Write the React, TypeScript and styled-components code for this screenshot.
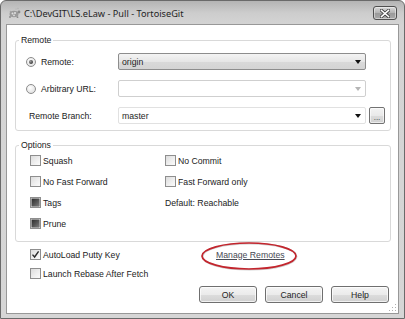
import React from 'react';
import styled, { createGlobalStyle } from 'styled-components';

const Global = createGlobalStyle`
  html, body { margin: 0; padding: 0; background: #ffffff; }
  body { width: 405px; height: 319px; overflow: hidden; }
  * { box-sizing: border-box; }
`;

const Window = styled.div`
  width: 405px;
  height: 319px;
  display: flex;
  flex-direction: column;
  background: linear-gradient(180deg, #b4b4b4 0px, #cdcdcd 12px, #d4d4d4 24px, #d6d6d6 100%);
  border: 1px solid #6a6a6a;
  border-radius: 6px 6px 0 0;
  font-family: "Liberation Sans", Arial, sans-serif;
  font-size: 8.7px;
  color: #222222;
`;

const TitleBar = styled.div`
  height: 23px;
  flex: none;
  display: flex;
  align-items: center;
  padding: 0 7px 0 7px;
  gap: 3px;
`;

const TitleText = styled.div`
  flex: 1;
  font-family: "Noto Sans", "Open Sans", sans-serif;
  font-size: 9.2px;
  color: #1e1e1e;
  white-space: nowrap;
  padding-top: 1px;
`;

const CloseButton = styled.div`
  width: 24px;
  height: 14px;
  margin-top: 1px;
  border: 1px solid #4f4f4f;
  border-radius: 3px;
  background: linear-gradient(180deg, #d9d9d9 0%, #b2b2b2 50%, #9a9a9a 51%, #a9a9a9 100%);
  box-shadow: inset 0 0 0 1px rgba(255, 255, 255, 0.45);
  display: flex;
  align-items: center;
  justify-content: center;
`;

const Client = styled.div`
  flex: 1;
  margin: 0 5px 4px 5px;
  border: 1px solid #989898;
  background: #ffffff;
  display: flex;
  flex-direction: column;
  padding: 15px 7px 0 8px;
`;

const GroupBox = styled.div<{ $height: number; $gap?: number }>`
  height: ${(p) => p.$height}px;
  margin-top: ${(p) => p.$gap ?? 0}px;
  border: 1px solid #d9d9d9;
  border-radius: 3px;
  display: flex;
  flex-direction: column;
  flex: none;
`;

const Legend = styled.div`
  align-self: flex-start;
  margin: -7px 0 0 3px;
  padding: 0 2px;
  height: 12px;
  line-height: 12px;
  background: #ffffff;
`;

const RemoteGrid = styled.div`
  display: grid;
  grid-template-columns: 102px 248px 1fr;
  grid-auto-rows: 17px;
  row-gap: 10px;
  margin-top: 7px;
  align-items: center;
`;

const FieldLabel = styled.div<{ $indent: number }>`
  display: flex;
  align-items: center;
  gap: 5px;
  padding-left: ${(p) => p.$indent}px;
  white-space: nowrap;
`;

const Radio = styled.span<{ $on?: boolean }>`
  width: 10px;
  height: 10px;
  border-radius: 50%;
  border: 1px solid #8c8c8c;
  background: radial-gradient(circle at 40% 35%, #ffffff 0%, #e4e4e4 70%, #d2d2d2 100%);
  display: inline-flex;
  align-items: center;
  justify-content: center;
  flex: none;
  &::after {
    content: '';
    width: 4px;
    height: 4px;
    border-radius: 50%;
    display: ${(p) => (p.$on ? 'block' : 'none')};
    background: radial-gradient(circle at 35% 35%, #9a9a9a 0%, #3c3c3c 70%, #222 100%);
  }
`;

const Combo = styled.div<{ $variant: 'list' | 'disabled' | 'edit' }>`
  height: 17px;
  display: flex;
  align-items: center;
  padding: 0 4px 0 3px;
  border-radius: 2px;
  border: 1px solid
    ${(p) => (p.$variant === 'list' ? '#8d8d8d' : p.$variant === 'disabled' ? '#cfcfcf' : '#e1e1e1')};
  background: ${(p) =>
    p.$variant === 'list'
      ? 'linear-gradient(180deg, #f4f4f4 0%, #e6e6e6 50%, #d9d9d9 51%, #d4d4d4 100%)'
      : '#ffffff'};
  color: #1e1e1e;
`;

const ComboText = styled.span`
  flex: 1;
  white-space: nowrap;
`;

const Arrow = styled.span<{ $dim?: boolean }>`
  width: 0;
  height: 0;
  border-left: 3px solid transparent;
  border-right: 3px solid transparent;
  border-top: 4px solid ${(p) => (p.$dim ? '#b5b5b5' : '#111111')};
  flex: none;
`;

const SmallButton = styled.div`
  width: 16px;
  height: 17px;
  margin-left: 3px;
  border: 1px solid #727272;
  border-radius: 2px;
  background: linear-gradient(180deg, #f3f3f3 0%, #e9e9e9 50%, #dcdcdc 51%, #d0d0d0 100%);
  box-shadow: inset 0 0 0 1px rgba(255, 255, 255, 0.6);
  display: flex;
  align-items: flex-end;
  justify-content: center;
  font-size: 8px;
  line-height: 11px;
  color: #333;
`;

const OptionsGrid = styled.div`
  display: grid;
  grid-template-columns: 135px 1fr;
  grid-auto-rows: 21px;
  margin-top: -1px;
  padding-left: 14px;
  align-items: center;
`;

const CheckRow = styled.div`
  display: flex;
  align-items: center;
  gap: 2px;
  white-space: nowrap;
`;

const Box = styled.span<{ $state: 'off' | 'on' | 'mixed' }>`
  width: 11px;
  height: 11px;
  flex: none;
  border: 1px solid #8e8e8e;
  background: linear-gradient(135deg, #dcdcdc 0%, #f0f0f0 60%, #fbfbfb 100%);
  display: inline-flex;
  align-items: center;
  justify-content: center;
  &::after {
    content: '';
    display: ${(p) => (p.$state === 'mixed' ? 'block' : 'none')};
    width: 7px;
    height: 7px;
    background: linear-gradient(135deg, #2f2f2f 0%, #555555 55%, #7a7a7a 100%);
    box-shadow: 0 0 0 0.5px #444;
  }
`;

const PlainText = styled.div`
  white-space: nowrap;
`;

const BottomGrid = styled.div`
  display: grid;
  grid-template-columns: 186px 1fr;
  grid-auto-rows: 19px;
  margin-top: 3px;
  padding-left: 15px;
  align-items: center;
`;

const LinkWrap = styled.div`
  position: relative;
  justify-self: start;
  display: flex;
  align-items: center;
`;

const Link = styled.span`
  color: #474a55;
  text-decoration: underline;
  text-underline-offset: 1px;
  white-space: nowrap;
`;

const Ellipse = styled.svg`
  position: absolute;
  left: -16px;
  top: -9px;
  overflow: visible;
  pointer-events: none;
`;

const ButtonRow = styled.div`
  display: flex;
  justify-content: flex-end;
  gap: 8px;
  margin-top: 3px;
  padding-right: 2px;
`;

const PushButton = styled.div`
  width: 58px;
  height: 17px;
  border: 1px solid #6f6f6f;
  border-radius: 3px;
  background: linear-gradient(180deg, #f4f4f4 0%, #ebebeb 50%, #dddddd 51%, #d0d0d0 100%);
  box-shadow: inset 0 0 0 1px rgba(255, 255, 255, 0.7);
  display: flex;
  align-items: center;
  justify-content: center;
  color: #1e1e1e;
`;

const Grip = styled.svg`
  align-self: flex-end;
  margin-top: auto;
  margin-right: -6px;
  margin-bottom: 1px;
`;

const TurtleIcon = () => (
  <svg width="13" height="12" viewBox="0 0 13 12">
    <ellipse cx="6" cy="7" rx="4.5" ry="3.2" fill="#9a9a9a" />
    <circle cx="4.5" cy="6.5" r="1" fill="#e0e0e0" />
    <circle cx="7" cy="6" r="1" fill="#e0e0e0" />
    <circle cx="6" cy="8.3" r="0.9" fill="#e0e0e0" />
    <circle cx="11" cy="5" r="1.4" fill="#8a8a8a" />
    <circle cx="2" cy="10" r="0.9" fill="#8a8a8a" />
    <circle cx="9.5" cy="10.2" r="0.9" fill="#8a8a8a" />
    <circle cx="2.5" cy="4.5" r="0.8" fill="#a5a5a5" />
    <circle cx="10" cy="1.5" r="0.7" fill="#b0b0b0" />
    <circle cx="8" cy="2" r="0.6" fill="#b0b0b0" />
  </svg>
);

const CloseX = () => (
  <svg width="10" height="9" viewBox="0 0 10 9">
    <path d="M1.5 1.5 L8.5 7.5 M8.5 1.5 L1.5 7.5" stroke="#3a3a3a" strokeWidth="3.2" strokeLinecap="square" />
    <path d="M1.5 1.5 L8.5 7.5 M8.5 1.5 L1.5 7.5" stroke="#ffffff" strokeWidth="1.6" strokeLinecap="square" />
  </svg>
);

const Check = () => (
  <svg width="9" height="9" viewBox="0 0 9 9">
    <path d="M1.5 4.6 L3.6 7 L7.6 1.3" stroke="#2a2a2a" strokeWidth="1.4" fill="none" />
  </svg>
);

type BoxState = 'off' | 'on' | 'mixed';

const CheckItem = ({ label, state = 'off' }: { label: string; state?: BoxState }) => (
  <CheckRow>
    <Box $state={state}>{state === 'on' && <Check />}</Box>
    <span>{label}</span>
  </CheckRow>
);

export default function App() {
  return (
    <>
      <Global />
      <Window>
        <TitleBar>
          <TurtleIcon />
          <TitleText>C:\DevGIT\LS.eLaw - Pull - TortoiseGit</TitleText>
          <CloseButton>
            <CloseX />
          </CloseButton>
        </TitleBar>
        <Client>
          <GroupBox $height={91}>
            <Legend>Remote</Legend>
            <RemoteGrid>
              <FieldLabel $indent={10}>
                <Radio $on />
                <span>Remote:</span>
              </FieldLabel>
              <Combo $variant="list">
                <ComboText>origin</ComboText>
                <Arrow />
              </Combo>
              <div />
              <FieldLabel $indent={10}>
                <Radio />
                <span>Arbitrary URL:</span>
              </FieldLabel>
              <Combo $variant="disabled">
                <ComboText />
                <Arrow $dim />
              </Combo>
              <div />
              <FieldLabel $indent={13}>
                <span>Remote Branch:</span>
              </FieldLabel>
              <Combo $variant="edit">
                <ComboText>master</ComboText>
                <Arrow />
              </Combo>
              <SmallButton>...</SmallButton>
            </RemoteGrid>
          </GroupBox>

          <GroupBox $height={97} $gap={14}>
            <Legend>Options</Legend>
            <OptionsGrid>
              <CheckItem label="Squash" />
              <CheckItem label="No Commit" />
              <CheckItem label="No Fast Forward" />
              <CheckItem label="Fast Forward only" />
              <CheckItem label="Tags" state="mixed" />
              <PlainText>Default: Reachable</PlainText>
              <CheckItem label="Prune" state="mixed" />
            </OptionsGrid>
          </GroupBox>

          <BottomGrid>
            <CheckItem label="AutoLoad Putty Key" state="on" />
            <LinkWrap>
              <Link>Manage Remotes</Link>
              <Ellipse width="98" height="30" viewBox="0 0 98 30">
                <ellipse cx="49.5" cy="15.5" rx="47" ry="13" fill="none" stroke="rgba(0,0,0,0.18)" strokeWidth="2" />
                <ellipse cx="49" cy="15" rx="47" ry="13" fill="none" stroke="#c3252d" strokeWidth="1.7" />
              </Ellipse>
            </LinkWrap>
            <CheckItem label="Launch Rebase After Fetch" />
          </BottomGrid>

          <ButtonRow>
            <PushButton>OK</PushButton>
            <PushButton>Cancel</PushButton>
            <PushButton>Help</PushButton>
          </ButtonRow>

          <Grip width="8" height="8" viewBox="0 0 8 8">
            <rect x="6" y="0" width="1" height="1" fill="#b0b0b0" />
            <rect x="3" y="3" width="1" height="1" fill="#b0b0b0" />
            <rect x="6" y="3" width="1" height="1" fill="#b0b0b0" />
            <rect x="0" y="6" width="1" height="1" fill="#b0b0b0" />
            <rect x="3" y="6" width="1" height="1" fill="#b0b0b0" />
            <rect x="6" y="6" width="1" height="1" fill="#b0b0b0" />
          </Grip>
        </Client>
      </Window>
    </>
  );
}
